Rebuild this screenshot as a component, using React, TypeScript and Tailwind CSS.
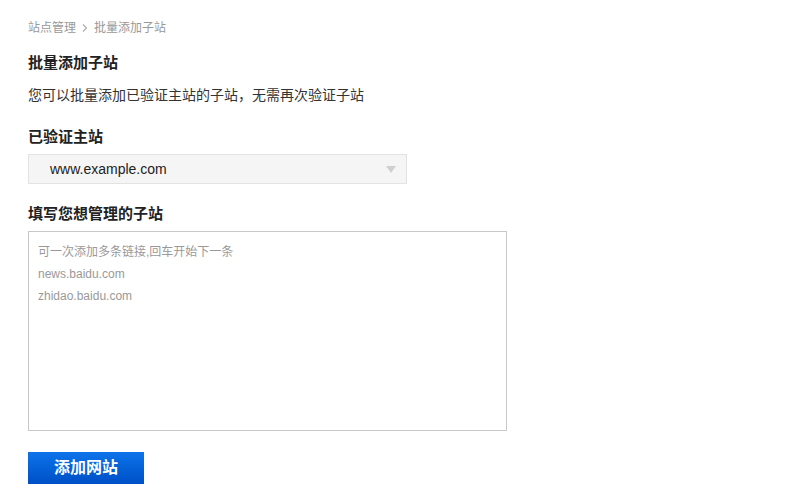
const font = { fontFamily: '"Liberation Sans", Arial, "Noto Sans CJK SC", sans-serif' };

export default function App() {
  return (
    <div className="min-h-[503px] w-[797px] bg-white pl-[28px] pt-[18px] text-[#333]" style={font}>
      <div className="flex h-[20px] items-center text-[12px] text-[#999]">
        <span>站点管理</span>
        <svg className="mx-[5px]" width="8" height="10" viewBox="0 0 8 10">
          <path d="M2 1.5 L5.5 5 L2 8.5" fill="none" stroke="#aaa" strokeWidth="1.1" />
        </svg>
        <span>批量添加子站</span>
      </div>

      <h2 className="mt-[15px] text-[15px] leading-[20px] font-bold text-[#222]">批量添加子站</h2>
      <p className="mt-[12px] text-[14px] leading-[20px] text-[#333]">
        您可以批量添加已验证主站的子站，无需再次验证子站
      </p>

      <h3 className="mt-[22px] text-[15px] leading-[20px] font-bold text-[#222]">已验证主站</h3>
      <div className="mt-[7px] flex h-[30px] w-[379px] items-center justify-between border border-[#e3e3e3] bg-[#f5f5f5] pr-[10px] pl-[21px]">
        <span className="text-[14px] text-[#222]">www.example.com</span>
        <svg width="10" height="7" viewBox="0 0 10 7">
          <path d="M0 0 H10 L5 7 Z" fill="#cfcfcf" />
        </svg>
      </div>

      <h3 className="mt-[20px] text-[15px] leading-[20px] font-bold text-[#222]">填写您想管理的子站</h3>
      <div className="mt-[7px] h-[200px] w-[479px] border border-[#c8c8c8] px-[9px] pt-[9px] text-[12px] leading-[22px] text-[#999]">
        <div>可一次添加多条链接,回车开始下一条</div>
        <div>news.baidu.com</div>
        <div>zhidao.baidu.com</div>
      </div>

      <button className="mt-[21px] flex h-[32px] w-[116px] items-center justify-center bg-gradient-to-b from-[#0e74ea] to-[#004fc6] text-[16px] font-bold text-white">
        添加网站
      </button>
    </div>
  );
}
